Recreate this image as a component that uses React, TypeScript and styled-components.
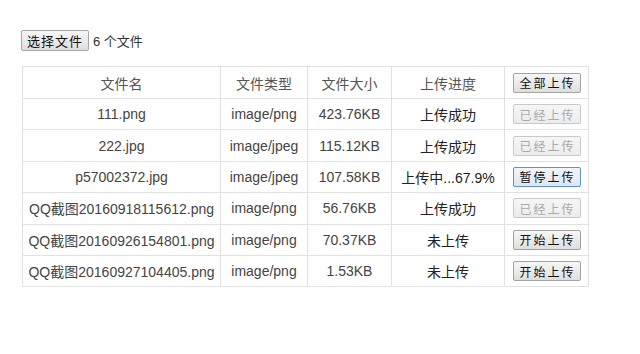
import React from "react";
import styled, { createGlobalStyle } from "styled-components";

const GlobalStyle = createGlobalStyle`
    body {
        margin: 0;
        background: #fff;
        font-family: "Liberation Sans", Arial, "Noto Sans CJK SC", sans-serif;
        color: #333;
    }
`

const Page = styled.div`
    padding: 30px 0 0 21px;
`

const FileRow = styled.div`
    display: flex;
    align-items: center;
    gap: 4px;
    font-size: 13px;
    color: #333;
`

const FileButton = styled.button`
    width: 68px;
    height: 21px;
    padding: 0;
    font-family: "Noto Sans CJK SC", sans-serif;
    font-size: 13px;
    letter-spacing: 1px;
    color: #111;
    border: 1px solid #a6a6a6;
    border-radius: 2px;
    background: linear-gradient(#f7f7f7, #dedede);
`

const Table = styled.table`
    margin-top: 15px;
    margin-left: 1px;
    border-collapse: collapse;
    table-layout: fixed;
    width: 567px;
    font-size: 14px;
`

const Th = styled.th`
    border: 1px solid #e1e1e1;
    height: 31px;
    padding: 0 4px;
    font-weight: normal;
    color: #555;
    text-align: center;
`

const Td = styled.td<{ $dark?: boolean }>`
    border: 1px solid #e1e1e1;
    height: 30.4px;
    padding: 0 4px;
    text-align: center;
    white-space: nowrap;
    color: ${p => (p.$dark ? "#222" : "#444")};
`

const ActionButton = styled.button<{ $state?: "normal" | "done" | "focus" }>`
    width: 68px;
    height: 20px;
    padding: 0;
    font-family: "Noto Sans CJK SC", sans-serif;
    font-size: 12px;
    letter-spacing: 2px;
    text-indent: 2px;
    border-radius: 2px;
    color: ${p => (p.$state === "done" ? "#a9a9a9" : "#111")};
    border: 1px solid ${p =>
        p.$state === "done" ? "#c9c9c9" : p.$state === "focus" ? "#5b93d3" : "#a3a3a3"};
    background: ${p =>
        p.$state === "done"
            ? "linear-gradient(#f6f6f6, #ececec)"
            : p.$state === "focus"
            ? "linear-gradient(#f2f6fb, #dde6f0)"
            : "linear-gradient(#f7f7f7, #dedede)"};
`

type Row = {
    name: string;
    type: string;
    size: string;
    progress: string;
    action: string;
    state: "normal" | "done" | "focus";
};

const rows: Row[] = [
    { name: "111.png", type: "image/png", size: "423.76KB", progress: "上传成功", action: "已经上传", state: "done" },
    { name: "222.jpg", type: "image/jpeg", size: "115.12KB", progress: "上传成功", action: "已经上传", state: "done" },
    { name: "p57002372.jpg", type: "image/jpeg", size: "107.58KB", progress: "上传中...67.9%", action: "暂停上传", state: "focus" },
    { name: "QQ截图20160918115612.png", type: "image/png", size: "56.76KB", progress: "上传成功", action: "已经上传", state: "done" },
    { name: "QQ截图20160926154801.png", type: "image/png", size: "70.37KB", progress: "未上传", action: "开始上传", state: "normal" },
    { name: "QQ截图20160927104405.png", type: "image/png", size: "1.53KB", progress: "未上传", action: "开始上传", state: "normal" },
];

export default function App() {
    return (
        <Page>
            <GlobalStyle />
            <FileRow>
                <FileButton>选择文件</FileButton>
                <span>6 个文件</span>
            </FileRow>
            <Table>
                <colgroup>
                    <col style={{ width: 198 }} />
                    <col style={{ width: 87 }} />
                    <col style={{ width: 84 }} />
                    <col style={{ width: 113 }} />
                    <col style={{ width: 84 }} />
                </colgroup>
                <thead>
                    <tr>
                        <Th>文件名</Th>
                        <Th>文件类型</Th>
                        <Th>文件大小</Th>
                        <Th>上传进度</Th>
                        <Th>
                            <ActionButton $state="normal">全部上传</ActionButton>
                        </Th>
                    </tr>
                </thead>
                <tbody>
                    {rows.map(r => (
                        <tr key={r.name}>
                            <Td>{r.name}</Td>
                            <Td>{r.type}</Td>
                            <Td>{r.size}</Td>
                            <Td $dark>{r.progress}</Td>
                            <Td>
                                <ActionButton $state={r.state}>{r.action}</ActionButton>
                            </Td>
                        </tr>
                    ))}
                </tbody>
            </Table>
        </Page>
    );
}
